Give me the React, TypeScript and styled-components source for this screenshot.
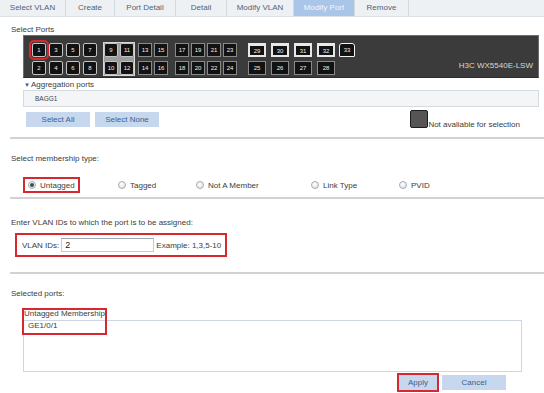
import React from 'react';
import styled, { createGlobalStyle, css } from 'styled-components';

const GlobalStyle = createGlobalStyle`
  html, body {
    margin: 0;
    padding: 0;
    background: #fff;
  }
  body {
    font-family: "Liberation Sans", Arial, sans-serif;
    font-size: 8px;
    color: #3c3c3c;
    white-space: nowrap;
  }
`;

const HIGHLIGHT = '#d7282f';

const Page = styled.div`
  width: 544px;
  height: 393px;
  overflow: hidden;
  display: flex;
  flex-direction: column;
`;

// Tabs
const TabBar = styled.div`
  display: flex;
  height: 17px;
  box-sizing: border-box;
  background: #eef1f4;
  border-bottom: 1px solid #dde2e7;
  flex-shrink: 0;
`;

const Tab = styled.div<{ $w: number; $active?: boolean }>`
  width: ${p => p.$w}px;
  box-sizing: border-box;
  border-right: 1px solid #d3d9df;
  text-align: center;
  line-height: 16px;
  color: #4f6378;
  ${p => p.$active && css`
    background: #a9c6e8;
    color: #f2f6fb;
  `}
`;

// Generic section pieces
const SectionTitle = styled.div<{ $top: number }>`
  margin: ${p => p.$top}px 0 0 11px;
  height: 10px;
  line-height: 10px;
  flex-shrink: 0;
`;

const Divider = styled.div<{ $top: number }>`
  margin: ${p => p.$top}px 0 0 10px;
  border-top: 2px solid #d2d2d2;
  flex-shrink: 0;
`;

// Device panel
const DevicePanel = styled.div`
  margin: 0 0 0 23px;
  width: 516px;
  height: 43px;
  box-sizing: border-box;
  background: #3b3b3b;
  border: 1px solid #6e6e6e;
  border-bottom-color: #2a2a2a;
  display: flex;
  align-items: flex-start;
  padding-top: 7px;
  flex-shrink: 0;
`;

const PortGroup = styled.div<{ $gap: number; $ml: number; $light?: boolean }>`
  display: grid;
  grid-template-rows: 14px 14px;
  grid-auto-flow: column;
  column-gap: ${p => p.$gap}px;
  row-gap: 4px;
  margin-left: ${p => p.$ml}px;
  ${p => p.$light && css`
    outline: 1px solid #d6d6d6;
    background: #9c9c9c;
  `}
`;

type PortKind = 'rj' | 'sq' | 'sfp' | 'fiber';

const Port = styled.div<{ $kind: PortKind; $w: number; $selected?: boolean }>`
  width: ${p => p.$w}px;
  height: 14px;
  box-sizing: border-box;
  background: #121212;
  color: #efefef;
  font-size: 6px;
  text-align: center;
  display: flex;
  align-items: center;
  justify-content: center;
  ${p => p.$kind === 'rj' && css`
    border: 1px solid #c4c4c4;
    border-radius: 2px;
  `}
  ${p => p.$kind === 'sq' && css`
    border: 1px solid #8a8a8a;
  `}
  ${p => p.$kind === 'sfp' && css`
    border: 2px solid #e8e8e8;
    border-top-width: 3px;
  `}
  ${p => p.$kind === 'fiber' && css`
    border: 1px solid #f2f2f2;
    border-radius: 3px 3px 1px 1px;
  `}
  ${p => p.$selected && css`
    outline: 2px solid ${HIGHLIGHT};
    outline-offset: 1px;
  `}
`;

const DeviceName = styled.div`
  margin-left: auto;
  align-self: flex-end;
  margin-bottom: 6px;
  padding-right: 5px;
  line-height: 10px;
  color: #d8d8d8;
`;

// Aggregation
const AggHeader = styled.div`
  margin: 2px 0 0 24px;
  height: 10px;
  line-height: 10px;
  display: flex;
  align-items: center;
  flex-shrink: 0;
`;

const Arrow = styled.span`
  color: #2a5db0;
  font-size: 6px;
  margin-right: 1px;
`;

const AggBox = styled.div`
  margin-left: 23px;
  width: 516px;
  height: 17px;
  box-sizing: border-box;
  background: #f3f5f7;
  border: 1px solid #d4dae0;
  font-size: 6.5px;
  line-height: 15px;
  padding-left: 11px;
  color: #444;
  flex-shrink: 0;
`;

const ButtonRow = styled.div`
  margin-top: 3px;
  height: 18px;
  display: flex;
  align-items: center;
  padding: 0 24px 0 26px;
  gap: 5px;
  flex-shrink: 0;
`;

const FlatButton = styled.div<{ $w: number }>`
  width: ${p => p.$w}px;
  height: 15px;
  background: #c6d7ee;
  color: #3b5f94;
  text-align: center;
  line-height: 15px;
  box-sizing: border-box;
  flex-shrink: 0;
`;

const LegendSwatch = styled.div`
  margin-left: auto;
  width: 18px;
  height: 18px;
  box-sizing: border-box;
  background: #555;
  border: 1px solid #1e1e1e;
  border-radius: 2px;
`;

const LegendText = styled.span`
  align-self: flex-end;
  margin: 0 0 -2px -5px;
  line-height: 10px;
`;

// Membership radios
const RadioRow = styled.div`
  margin-top: 13px;
  height: 16px;
  display: flex;
  align-items: center;
  padding-left: 23px;
  flex-shrink: 0;
`;

const RadioSlot = styled.div<{ $w?: number }>`
  width: ${p => (p.$w ? `${p.$w}px` : 'auto')};
  display: flex;
  align-items: center;
`;

const RadioLabel = styled.label<{ $highlight?: boolean }>`
  display: flex;
  align-items: center;
  gap: 4px;
  height: 16px;
  box-sizing: border-box;
  ${p => p.$highlight && css`
    border: 2px solid ${HIGHLIGHT};
    padding: 0 3px 0 3px;
  `}
`;

const RadioDot = styled.span<{ $checked?: boolean }>`
  width: 8px;
  height: 8px;
  box-sizing: border-box;
  border-radius: 50%;
  border: 1px solid #a7acb2;
  background: radial-gradient(circle at 40% 35%, #ffffff, #d9dcdf);
  display: flex;
  align-items: center;
  justify-content: center;
  &::after {
    content: '';
    width: 4px;
    height: 4px;
    border-radius: 50%;
    background: ${p => (p.$checked ? '#3b4a5c' : 'transparent')};
  }
`;

// VLAN IDs
const VlanBox = styled.div`
  margin: 5px 0 0 15px;
  width: 212px;
  height: 24px;
  box-sizing: border-box;
  border: 2px solid ${HIGHLIGHT};
  display: flex;
  align-items: center;
  padding-left: 5px;
  flex-shrink: 0;
`;

const VlanInput = styled.input`
  margin-left: 2px;
  width: 93px;
  height: 14px;
  flex-shrink: 0;
  box-sizing: border-box;
  border: 1px solid #c3ccd6;
  border-top-color: #9aa4ae;
  padding: 0 3px;
  font-family: "Liberation Sans", Arial, sans-serif;
  font-size: 9px;
  color: #222;
  outline: none;
`;

const Hint = styled.span`
  margin-left: 2px;
`;

// Selected ports
const MemberGroup = styled.div`
  position: relative;
  margin: 9px 0 0 0;
  padding-left: 23px;
  flex-shrink: 0;
`;

const MemberCaption = styled.div`
  height: 12px;
  line-height: 12px;
  padding-left: 1px;
`;

const MemberList = styled.div`
  width: 499px;
  height: 52px;
  box-sizing: border-box;
  border: 1px solid #cdd7e3;
  padding: 0 0 0 4px;
  line-height: 10px;
`;

const HighlightFrame = styled.div`
  position: absolute;
  left: 22px;
  top: 0;
  width: 85px;
  height: 27px;
  box-sizing: border-box;
  border: 2px solid ${HIGHLIGHT};
  pointer-events: none;
`;

const ActionRow = styled.div`
  margin-top: 1px;
  height: 19px;
  display: flex;
  align-items: center;
  justify-content: flex-end;
  padding-right: 38px;
  gap: 3px;
  flex-shrink: 0;
`;

const HighlightWrap = styled.div`
  border: 2px solid ${HIGHLIGHT};
  display: flex;
`;

type PortSpec = { top: number; bottom?: number };
type GroupSpec = {
  gap: number;
  ml: number;
  w: number;
  kind: PortKind;
  topKind?: PortKind;
  light?: boolean;
  cols: PortSpec[];
};

const portGroups: GroupSpec[] = [
  { gap: 3, ml: 8, w: 14, kind: 'rj', cols: [{ top: 1, bottom: 2 }, { top: 3, bottom: 4 }, { top: 5, bottom: 6 }, { top: 7, bottom: 8 }] },
  { gap: 2, ml: 7, w: 14, kind: 'rj', light: true, cols: [{ top: 9, bottom: 10 }, { top: 11, bottom: 12 }] },
  { gap: 2, ml: 4, w: 14, kind: 'sq', cols: [{ top: 13, bottom: 14 }, { top: 15, bottom: 16 }] },
  { gap: 2, ml: 7, w: 14, kind: 'sq', cols: [{ top: 17, bottom: 18 }, { top: 19, bottom: 20 }, { top: 21, bottom: 22 }, { top: 23, bottom: 24 }] },
  { gap: 5, ml: 11, w: 18, kind: 'sq', topKind: 'sfp', cols: [{ top: 29, bottom: 25 }, { top: 30, bottom: 26 }, { top: 31, bottom: 27 }, { top: 32, bottom: 28 }] },
  { gap: 0, ml: 4, w: 16, kind: 'fiber', cols: [{ top: 33 }] },
];

const tabs = [
  { label: 'Select VLAN', w: 66 },
  { label: 'Create', w: 49 },
  { label: 'Port Detail', w: 61 },
  { label: 'Detail', w: 51 },
  { label: 'Modify VLAN', w: 67 },
  { label: 'Modify Port', w: 61, active: true },
  { label: 'Remove', w: 54 },
];

const memberships = [
  { label: 'Untagged', w: 95, checked: true },
  { label: 'Tagged', w: 78 },
  { label: 'Not A Member', w: 115 },
  { label: 'Link Type', w: 88 },
  { label: 'PVID' },
];

const App: React.FC = () => {
  return (
    <Page>
      <GlobalStyle />
      <TabBar>
        {tabs.map(t => (
          <Tab key={t.label} $w={t.w} $active={t.active}>{t.label}</Tab>
        ))}
      </TabBar>

      <SectionTitle $top={8}>Select Ports</SectionTitle>
      <DevicePanel>
        {portGroups.map((g, gi) => (
          <PortGroup key={gi} $gap={g.gap} $ml={g.ml} $light={g.light}>
            {g.cols.map(c => (
              <React.Fragment key={c.top}>
                <Port $kind={g.topKind ?? g.kind} $w={g.w} $selected={c.top === 1}>{c.top}</Port>
                {c.bottom !== undefined && (
                  <Port $kind={g.kind} $w={g.w}>{c.bottom}</Port>
                )}
              </React.Fragment>
            ))}
          </PortGroup>
        ))}
        <DeviceName>H3C WX5540E-LSW</DeviceName>
      </DevicePanel>

      <AggHeader><Arrow>▼</Arrow>Aggregation ports</AggHeader>
      <AggBox>BAGG1</AggBox>
      <ButtonRow>
        <FlatButton $w={64}>Select All</FlatButton>
        <FlatButton $w={64}>Select None</FlatButton>
        <LegendSwatch />
        <LegendText>Not avaliable for selection</LegendText>
      </ButtonRow>

      <Divider $top={9} />
      <SectionTitle $top={15}>Select membership type:</SectionTitle>
      <RadioRow>
        {memberships.map(m => (
          <RadioSlot key={m.label} $w={m.w}>
            <RadioLabel $highlight={m.checked}>
              <RadioDot $checked={m.checked} />
              {m.label}
            </RadioLabel>
          </RadioSlot>
        ))}
      </RadioRow>

      <Divider $top={4} />
      <SectionTitle $top={19}>Enter VLAN IDs to which the port is to be assigned:</SectionTitle>
      <VlanBox>
        <span>VLAN IDs:</span>
        <VlanInput defaultValue="2" />
        <Hint>Example: 1,3,5-10</Hint>
      </VlanBox>

      <Divider $top={15} />
      <SectionTitle $top={15}>Selected ports:</SectionTitle>
      <MemberGroup>
        <MemberCaption>Untagged Membership</MemberCaption>
        <MemberList>GE1/0/1</MemberList>
        <HighlightFrame />
      </MemberGroup>

      <ActionRow>
        <HighlightWrap>
          <FlatButton $w={38}>Apply</FlatButton>
        </HighlightWrap>
        <FlatButton $w={64}>Cancel</FlatButton>
      </ActionRow>
    </Page>
  );
};

export default App;
